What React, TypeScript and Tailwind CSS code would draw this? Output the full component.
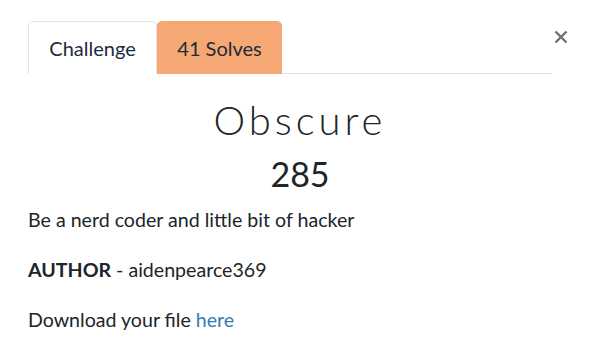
export default function App() {
  return (
    <div className="relative h-[353px] w-[600px] bg-white font-['Lato',sans-serif] text-[#212529]">
      <button className="absolute left-[552px] top-[28px] flex h-[18px] w-[18px] items-center justify-center text-[#707070]">
        <svg width="14" height="14" viewBox="0 0 14 14" fill="none">
          <path d="M1.5 1.5L12.5 12.5M12.5 1.5L1.5 12.5" stroke="currentColor" strokeWidth="2.4" />
        </svg>
      </button>
      <div className="px-[28px] pt-[21px]">
        <div className="flex w-[524px] border-b border-[#dee2e6]">
          <div className="-mb-px flex h-[53px] w-[129px] items-center justify-center rounded-t-[5px] border border-b-white border-[#dee2e6] bg-white text-[20px] text-[#1c2b3c]">
            Challenge
          </div>
          <div className="-mb-px flex h-[53px] w-[125px] items-center justify-center rounded-t-[5px] bg-[#f5a874] text-[20px] text-[#1c2b3c]">
            41 Solves
          </div>
        </div>
        <div className="mt-[22px] text-center">
          <h2 className="font-['Lato',sans-serif] text-[40px] font-light leading-[48px] tracking-[0.1em]">Obscure</h2>
          <h4 className="mt-[10px] text-[34px] leading-[40px]">285</h4>
        </div>
        <div className="mt-[12px] text-[19.6px] leading-[28px]">
          <p>Be a nerd coder and little bit of hacker</p>
          <p className="mt-[22px]">
            <strong className="font-bold">AUTHOR</strong> - aidenpearce369
          </p>
          <p className="mt-[22px]">
            Download your file <a className="text-[#337ab7]">here</a>
          </p>
        </div>
      </div>
    </div>
  );
}
